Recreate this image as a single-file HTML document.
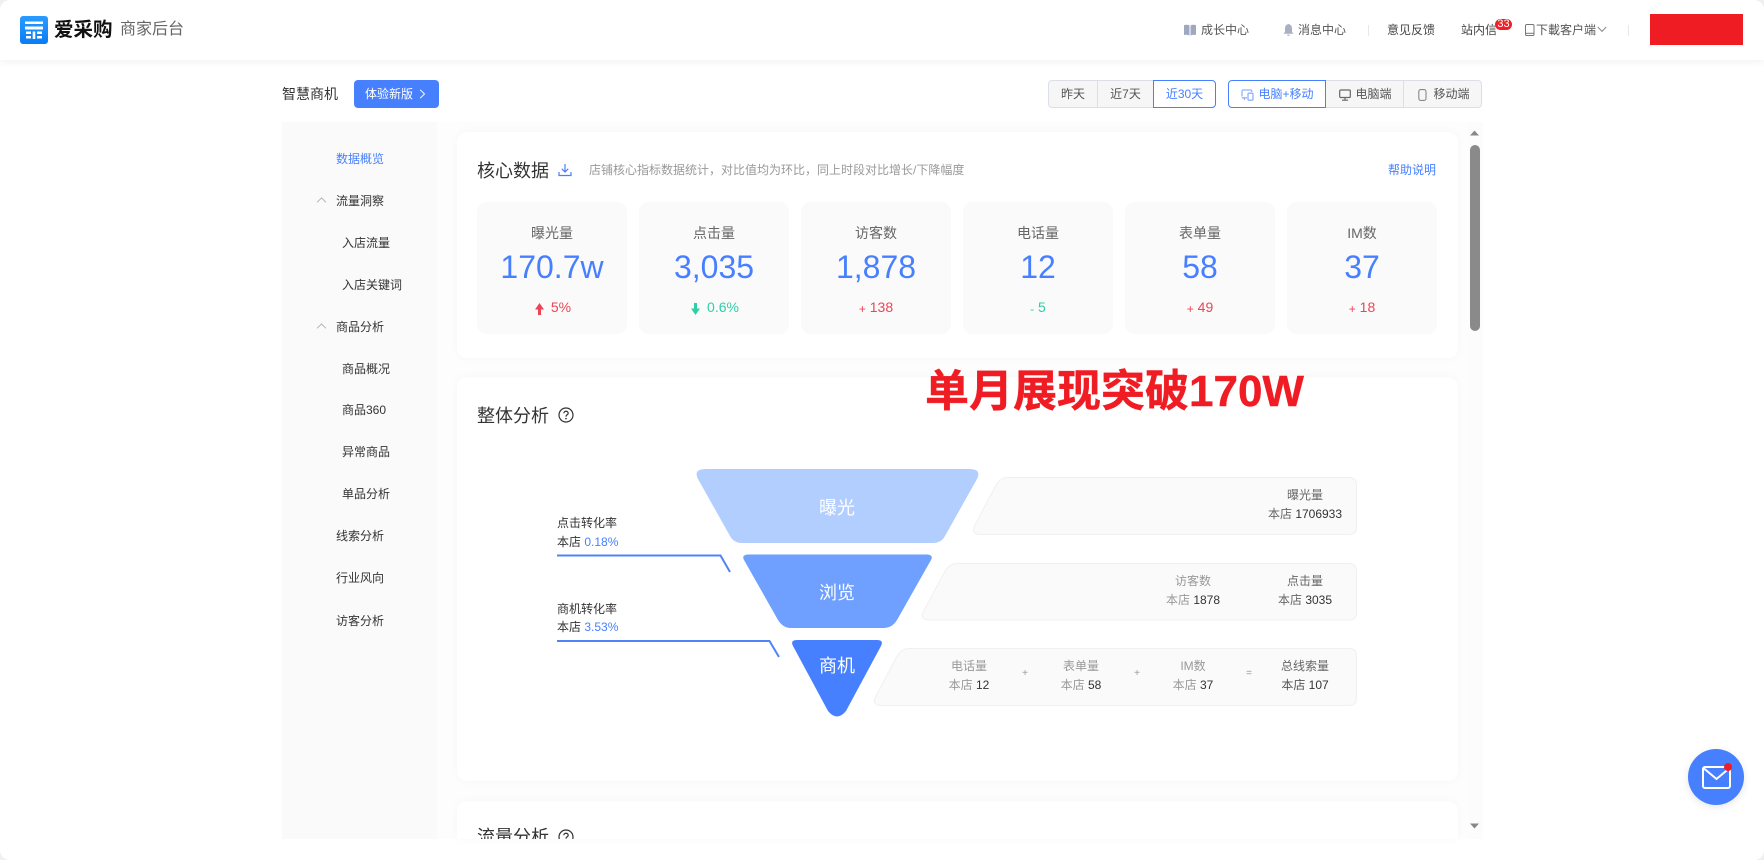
<!DOCTYPE html>
<html lang="zh-CN">
<head>
<meta charset="utf-8">
<title>商家后台</title>
<style>
*{box-sizing:border-box;margin:0;padding:0}
html,body{width:1764px;height:860px;overflow:hidden;background:#fff}
body{font-family:"Liberation Sans","Noto Sans CJK SC",sans-serif;color:#333;position:relative}
.t{position:absolute;white-space:nowrap;line-height:20px;height:20px;font-size:12px}
.c{transform:translateX(-50%);text-align:center}
.box{position:absolute}
#hdr{position:absolute;left:0;top:0;width:1764px;height:60px;background:#fff;box-shadow:0 1px 8px rgba(0,0,0,.07)}
.seg{position:absolute;top:80px;height:28px;border:1px solid #dcdfe8;background:#f6f6f7;font-size:12px;line-height:26px;text-align:center;color:#555}
.seg.on{border:1px solid #4780ff;background:#fff;color:#4780ff;z-index:1}
#side{position:absolute;left:282px;top:122px;width:155px;height:717px;background:#fafafa}
.card{position:absolute;left:457px;width:1001px;background:#fff;border-radius:10px;box-shadow:0 0 10px rgba(0,0,0,.03)}
.stat{position:absolute;top:202px;width:150px;height:132px;background:#fafafa;border-radius:10px}
.stat .l{position:absolute;left:0;right:0;top:21px;text-align:center;font-size:14px;line-height:20px;color:#666}
.stat .n{position:absolute;left:0;right:0;top:45px;text-align:center;font-size:32px;line-height:40px;color:#4780ff}
.stat .d{position:absolute;left:0;right:0;top:95px;text-align:center;font-size:14px;line-height:20px}
.stat .d i{font-style:normal;font-size:12px;position:relative;top:1px}
.red{color:#ee4455}.grn{color:#2ecfa6}
.g{color:#999}.k{color:#333}
#frame{position:absolute;left:0;top:0;width:1764px;height:860px;border-radius:10px;box-shadow:0 0 0 20px #f0f0f0;z-index:5}
</style>
</head>
<body>

<div id="side"></div>
<div class="box" style="left:437px;top:122px;width:1046px;height:717px;background:#fdfdfd"></div>
<div class="box" style="left:1469px;top:122px;width:14px;height:717px;background:#fcfcfc"></div>

<div class="card" style="top:132px;height:226px"></div>
<div class="card" style="top:377px;height:404px"></div>
<div class="card" style="top:801px;height:38px;border-radius:10px 10px 0 0"></div>

<div id="hdr"></div>

<!-- logo -->
<svg class="box" style="left:20px;top:16px" width="28" height="28" viewBox="0 0 28 28">
<defs><linearGradient id="lg" x1="0" y1="0" x2="0" y2="1"><stop offset="0" stop-color="#2a9bff"/><stop offset="1" stop-color="#0a7cf5"/></linearGradient></defs>
<rect width="28" height="28" rx="3" fill="url(#lg)"/>
<rect x="5" y="5.500" width="18" height="2.500" fill="#fff"/>
<rect x="5" y="10.500" width="18" height="3" fill="#fff"/>
<rect x="6" y="15.500" width="5" height="2.500" fill="#fff"/>
<rect x="6" y="20" width="5" height="2.500" fill="#fff"/>
<rect x="12.700" y="15.500" width="2.600" height="7.500" fill="#fff"/>
<rect x="17" y="15.500" width="5" height="2.500" fill="#fff"/>
<rect x="17" y="20" width="5" height="2.500" fill="#fff"/>
</svg>
<div class="t" style="left:54px;top:19px;font-size:19.5px;font-weight:700;color:#111;line-height:22px;height:22px">爱采购</div>
<div class="t" style="left:120px;top:19px;font-size:16px;color:#666;line-height:22px;height:22px">商家后台</div>

<!-- top right -->
<svg class="box" style="left:1184px;top:24px" width="12" height="12" viewBox="0 0 12 12"><path d="M0 1.200 Q3 .2 5.500 1.500V11.500Q3 10.200 0 11ZM12 1.200Q9 .2 6.500 1.500V11.500Q9 10.200 12 11Z" fill="#9fa8c0"/></svg>
<div class="t" style="left:1201px;top:20px;color:#555">成长中心</div>
<svg class="box" style="left:1283px;top:24px" width="11" height="12" viewBox="0 0 11 12"><path d="M5.500 0C3 .6 2 2.400 2 4.500V8L.3 9.800H10.700L9 8V4.500C9 2.400 8 .6 5.500 0ZM4 10.600H7C7 12.200 4 12.200 4 10.600Z" fill="#aab0c4"/></svg>
<div class="t" style="left:1298px;top:20px;color:#555">消息中心</div>
<div class="box" style="left:1368px;top:25px;width:1px;height:11px;background:#e8e8e8"></div>
<div class="t" style="left:1387px;top:20px;color:#444">意见反馈</div>
<div class="t" style="left:1461px;top:20px;color:#444">站内信</div>
<div class="box" style="left:1495px;top:19px;width:17px;height:11px;background:#ee1f26;border-radius:6px;color:#fff;font-size:11px;line-height:11px;text-align:center">33</div>
<svg class="box" style="left:1525px;top:24px" width="10" height="12" viewBox="0 0 10 12"><rect x=".5" y=".5" width="8.500" height="11" rx="1.300" fill="none" stroke="#777"/><path d="M1 9.300H8.500" stroke="#777"/></svg>
<div class="t" style="left:1536px;top:20px;color:#555">下載客户端</div>
<svg class="box" style="left:1597px;top:26px" width="10" height="7" viewBox="0 0 10 7"><path d="M.8 1 5 5.400 9.200 1" fill="none" stroke="#888"/></svg>
<div class="box" style="left:1628px;top:25px;width:1px;height:11px;background:#e8e8e8"></div>
<div class="box" style="left:1650px;top:14px;width:93px;height:31px;background:#f01c24"></div>

<!-- toolbar -->
<div class="t" style="left:282px;top:84px;font-size:14px;color:#333">智慧商机</div>
<div class="box" style="left:354px;top:80px;width:85px;height:28px;background:#4780ff;border-radius:4px"></div>
<div class="t" style="left:365px;top:84px;color:#fff">体验新版</div>
<svg class="box" style="left:419px;top:89px" width="7" height="10" viewBox="0 0 7 10"><path d="M1.200 .8 5.500 5 1.200 9.200" fill="none" stroke="#fff"/></svg>

<div class="seg" style="left:1048px;width:50px;border-radius:4px 0 0 4px">昨天</div>
<div class="seg" style="left:1097px;width:57px">近7天</div>
<div class="seg on" style="left:1153px;width:63px;border-radius:0 4px 4px 0">近30天</div>

<div class="seg on" style="left:1228px;width:98px;border-radius:4px 0 0 4px;padding-left:18px">电脑+移动</div>
<svg class="box" style="left:1241px;top:89px;z-index:2" width="13" height="12" viewBox="0 0 13 12"><path d="M1 7.500V2.200Q1 1 2.200 1H9.500Q10.700 1 10.700 2.200V3" fill="none" stroke="#8fb2ff" stroke-width="1.300"/><path d="M.8 8.800H6M3.400 8.800V11" stroke="#8fb2ff" stroke-width="1.300"/><rect x="7" y="4.200" width="5" height="7" rx="1" fill="none" stroke="#8fb2ff" stroke-width="1.300"/></svg>
<div class="seg" style="left:1325px;width:79px;padding-left:18px">电脑端</div>
<svg class="box" style="left:1339px;top:89px" width="12" height="12" viewBox="0 0 12 12"><rect x=".7" y="1" width="10.600" height="7.500" rx="1" fill="none" stroke="#666" stroke-width="1.200"/><path d="M6 8.500V11M3 11.200H9" stroke="#666" stroke-width="1.200"/></svg>
<div class="seg" style="left:1403px;width:79px;border-radius:0 4px 4px 0;padding-left:18px">移动端</div>
<svg class="box" style="left:1418px;top:89px" width="9" height="12" viewBox="0 0 9 12"><rect x=".8" y=".6" width="7.200" height="10.800" rx="2" fill="none" stroke="#888" stroke-width="1.100"/></svg>

<!-- sidebar -->
<div class="t" style="left:336px;top:149px;color:#4780ff">数据概览</div>
<svg class="box" style="left:316px;top:197px" width="11" height="6" viewBox="0 0 11 6"><path d="M1 5.300 5.500 1 10 5.300" fill="none" stroke="#b5b5b5"/></svg>
<div class="t" style="left:336px;top:191px">流量洞察</div>
<div class="t" style="left:342px;top:233px">入店流量</div>
<div class="t" style="left:342px;top:275px">入店关键词</div>
<svg class="box" style="left:316px;top:323px" width="11" height="6" viewBox="0 0 11 6"><path d="M1 5.300 5.500 1 10 5.300" fill="none" stroke="#b5b5b5"/></svg>
<div class="t" style="left:336px;top:317px">商品分析</div>
<div class="t" style="left:342px;top:359px">商品概况</div>
<div class="t" style="left:342px;top:400px">商品360</div>
<div class="t" style="left:342px;top:442px">异常商品</div>
<div class="t" style="left:342px;top:484px">单品分析</div>
<div class="t" style="left:336px;top:526px">线索分析</div>
<div class="t" style="left:336px;top:568px">行业风向</div>
<div class="t" style="left:336px;top:611px">访客分析</div>

<!-- core data -->
<div class="t" style="left:477px;top:161px;font-size:18px;color:#333;height:20px">核心数据</div>
<svg class="box" style="left:558px;top:163px" width="14" height="14" viewBox="0 0 14 14"><path d="M7 1V8.800M3.800 5.800 7 9 10.200 5.800" fill="none" stroke="#4780ff" stroke-width="1.200"/><path d="M1 9V12.500H13V9" fill="none" stroke="#4780ff" stroke-width="1.200"/></svg>
<div class="t" style="left:589px;top:160px;color:#999">店铺核心指标数据统计，对比值均为环比，同上时段对比增长/下降幅度</div>
<div class="t" style="left:1388px;top:160px;color:#4780ff">帮助说明</div>

<div class="stat" style="left:477px"><div class="l">曝光量</div><div class="n">170.7w</div><div class="d red"><svg width="9" height="12" viewBox="0 0 9 12" style="vertical-align:-3px;margin-right:7px;margin-left:2px"><path d="M4.500 0 9 6.500H6V12H3V6.500H0Z" fill="#ee4455"/></svg>5%</div></div>
<div class="stat" style="left:639px"><div class="l">点击量</div><div class="n">3,035</div><div class="d grn"><svg width="9" height="12" viewBox="0 0 9 12" style="vertical-align:-3px;margin-right:7px;margin-left:2px"><path d="M4.500 12 9 5.500H6V0H3V5.500H0Z" fill="#2ecfa6"/></svg>0.6%</div></div>
<div class="stat" style="left:801px"><div class="l">访客数</div><div class="n">1,878</div><div class="d red"><i>+</i> 138</div></div>
<div class="stat" style="left:963px"><div class="l">电话量</div><div class="n">12</div><div class="d grn"><i>-</i> 5</div></div>
<div class="stat" style="left:1125px"><div class="l">表单量</div><div class="n">58</div><div class="d red"><i>+</i> 49</div></div>
<div class="stat" style="left:1287px"><div class="l">IM数</div><div class="n">37</div><div class="d red"><i>+</i> 18</div></div>

<!-- analysis -->
<div class="t" style="left:477px;top:406px;font-size:18px;color:#333">整体分析</div>
<svg class="box" style="left:558px;top:407px" width="16" height="16" viewBox="0 0 16 16"><circle cx="8" cy="8" r="7" fill="none" stroke="#333" stroke-width="1.200"/><path d="M5.800 6.300C5.800 3.600 10.200 3.600 10.200 6.200 10.200 7.800 8 7.800 8 9.600" fill="none" stroke="#333" stroke-width="1.200"/><circle cx="8" cy="11.600" r=".8" fill="#333"/></svg>
<div class="t" style="left:925px;top:367px;font-size:44px;font-weight:700;color:#f01c24;line-height:50px;height:50px;-webkit-text-stroke:.4px #f01c24">单月展现突破170W</div>

<svg class="box" style="left:540px;top:460px" width="840" height="270" viewBox="540 460 840 270">
<path d="M706 469H969Q982 469 977 479L945 536Q941 543 933 543H742Q734 543 730 536L698 479Q693 469 706 469Z" fill="#b2ceff"/>
<path d="M749 554.500H926Q934 554.500 931 560L897 620Q892 628 884 628H791Q783 628 778 620L744 560Q741 554.500 749 554.500Z" fill="#6f9fff"/>
<path d="M797 640H877Q884 640 881 646L846 711Q837 722 828 711L793 646Q790 640 797 640Z" fill="#4780ff"/>
<path d="M1008 477.500H1349Q1356.500 477.500 1356.500 485V527Q1356.500 534.500 1349 534.500H981Q970 534.500 975 525L995 487Q1000 477.500 1008 477.500Z" fill="#fafafa" stroke="#f0f0f0"/>
<path d="M957 563.500H1349Q1356.500 563.500 1356.500 571V612.500Q1356.500 620 1349 620H930Q919 620 924 610.500L944 573Q949 563.500 957 563.500Z" fill="#fafafa" stroke="#f0f0f0"/>
<path d="M909 648.500H1349Q1356.500 648.500 1356.500 656V698Q1356.500 705.500 1349 705.500H882Q871 705.500 876 696L896 658Q901 648.500 909 648.500Z" fill="#fafafa" stroke="#f0f0f0"/>
<path d="M557 555.500H720.500L730 572" fill="none" stroke="#4f84f8" stroke-width="2"/>
<path d="M557 641H769.500L779 657" fill="none" stroke="#4f84f8" stroke-width="2"/>
</svg>

<div class="t c" style="left:837px;top:497px;font-size:18px;color:#fff;line-height:22px;height:22px">曝光</div>
<div class="t c" style="left:837px;top:582px;font-size:18px;color:#fff;line-height:22px;height:22px">浏览</div>
<div class="t c" style="left:837px;top:655px;font-size:18px;color:#fff;line-height:22px;height:22px">商机</div>

<div class="t" style="left:557px;top:513px;color:#333">点击转化率</div>
<div class="t" style="left:557px;top:532px;color:#333">本店 <span style="color:#4780ff">0.18%</span></div>
<div class="t" style="left:557px;top:599px;color:#333">商机转化率</div>
<div class="t" style="left:557px;top:617px;color:#333">本店 <span style="color:#4780ff">3.53%</span></div>

<div class="t c" style="left:1305px;top:485px;color:#666">曝光量</div>
<div class="t c" style="left:1305px;top:504px;color:#666">本店 <span class="k">1706933</span></div>

<div class="t c g" style="left:1193px;top:571px">访客数</div>
<div class="t c g" style="left:1193px;top:590px">本店 <span class="k">1878</span></div>
<div class="t c" style="left:1305px;top:571px;color:#666">点击量</div>
<div class="t c" style="left:1305px;top:590px;color:#666">本店 <span class="k">3035</span></div>

<div class="t c g" style="left:969px;top:656px">电话量</div>
<div class="t c g" style="left:969px;top:675px">本店 <span class="k">12</span></div>
<div class="t c g" style="left:1025px;top:664px;font-size:10px">+</div>
<div class="t c g" style="left:1081px;top:656px">表单量</div>
<div class="t c g" style="left:1081px;top:675px">本店 <span class="k">58</span></div>
<div class="t c g" style="left:1137px;top:664px;font-size:10px">+</div>
<div class="t c g" style="left:1193px;top:656px">IM数</div>
<div class="t c g" style="left:1193px;top:675px">本店 <span class="k">37</span></div>
<div class="t c g" style="left:1249px;top:664px;font-size:10px">=</div>
<div class="t c" style="left:1305px;top:656px;color:#666">总线索量</div>
<div class="t c" style="left:1305px;top:675px;color:#555">本店 <span class="k">107</span></div>

<!-- third card title, clipped -->
<div class="box" style="left:457px;top:801px;width:1001px;height:38px;overflow:hidden">
<div class="t" style="left:20px;top:26px;font-size:18px;color:#333">流量分析</div>
<svg class="box" style="left:101px;top:28px" width="16" height="16" viewBox="0 0 16 16"><circle cx="8" cy="8" r="7" fill="none" stroke="#333" stroke-width="1.200"/><path d="M5.800 6.300C5.800 3.600 10.200 3.600 10.200 6.200 10.200 7.800 8 7.800 8 9.600" fill="none" stroke="#333" stroke-width="1.200"/></svg>
</div>

<!-- scrollbar -->
<div class="box" style="left:1470px;top:145px;width:10px;height:186px;background:#8a8a8a;border-radius:5px"></div>
<svg class="box" style="left:1470px;top:130px" width="9" height="6" viewBox="0 0 9 6"><path d="M4.500 .5 9 5.500H0Z" fill="#888"/></svg>
<svg class="box" style="left:1470px;top:823px" width="9" height="6" viewBox="0 0 9 6"><path d="M4.500 5.500 9 .5H0Z" fill="#888"/></svg>

<!-- float button -->
<div class="box" style="left:1688px;top:749px;width:56px;height:56px;border-radius:50%;background:#4780ff;box-shadow:0 2px 8px rgba(0,0,0,.1)"></div>
<svg class="box" style="left:1700px;top:762px" width="32" height="30" viewBox="0 0 32 30">
<rect x="3" y="5" width="27" height="21" rx="2" fill="none" stroke="#fff" stroke-width="2"/>
<path d="M4 6.500 16.500 17 29 6.500" fill="none" stroke="#fff" stroke-width="2"/>
</svg>
<div class="box" style="left:1724px;top:763px;width:8px;height:8px;border-radius:50%;background:#f01c24"></div>

<div id="frame"></div>
</body>
</html>
